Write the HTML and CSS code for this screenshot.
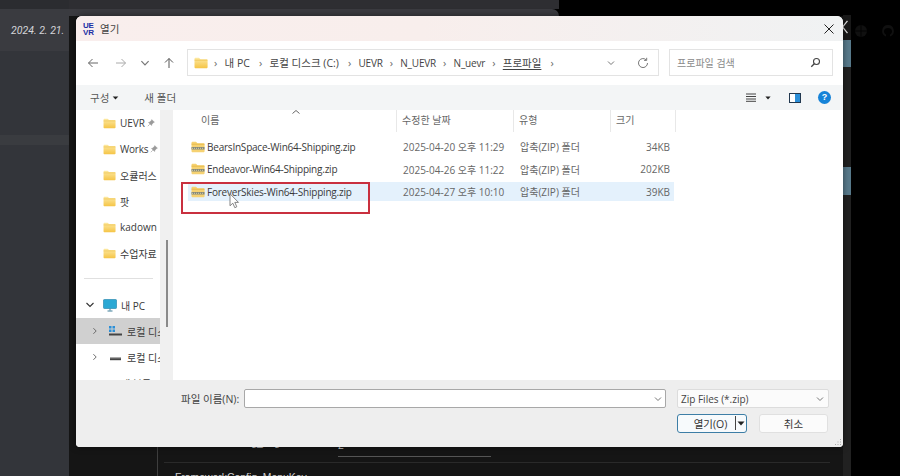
FILE: index.html
```html
<!DOCTYPE html>
<html lang="ko">
<head>
<meta charset="utf-8">
<title>열기</title>
<link rel="stylesheet" href="styles.css">
</head>
<body>
<svg class="defs" width="0" height="0">
  <defs>
    <linearGradient id="fg" x1="0" y1="0" x2="0" y2="1"><stop offset="0" stop-color="#fdeaa5"/><stop offset="1" stop-color="#f5c445"/></linearGradient>
    <symbol id="folder" viewBox="0 0 14 12"><path d="M.5 2C.5 1.200 1 .7 1.800 .7H5l1.500 1.500h5.800c.8 0 1.300.5 1.300 1.300V10c0 .8-.5 1.300-1.300 1.300H1.800C1 11.300.5 10.800.5 10z" fill="url(#fg)"/><path d="M.5 3.200h13" stroke="#e9b93c" stroke-width=".6"/></symbol>
    <symbol id="zip" viewBox="0 0 14 12"><path d="M.5 2C.5 1.200 1 .7 1.800 .7H5l1.500 1.500h5.800c.8 0 1.300.5 1.300 1.300V10c0 .8-.5 1.300-1.300 1.300H1.800C1 11.300.5 10.800.5 10z" fill="#f6d272"/><path d="M.5 3.200h13" stroke="#e3b03a" stroke-width=".7"/><path d="M.5 6h13v2.600H.5z" fill="#86897a"/><path d="M1 7.300h12" stroke="#d8d2a8" stroke-width="1" stroke-dasharray="1 1"/></symbol>
    <symbol id="pin" viewBox="0 0 10 10"><path d="M6 .8 9.200 4 7.700 4.700 6 6.800 5.700 8 2 4.300 3.200 4 5.300 2.300zM3.500 6.500 1 9" fill="#9a9a9a" stroke="#9a9a9a" stroke-width=".8"/></symbol>
    <symbol id="chev" viewBox="0 0 10 10"><path d="M2 3.500 5 6.500 8 3.500" fill="none" stroke="#777" stroke-width="1"/></symbol>
    <symbol id="chevr" viewBox="0 0 10 10"><path d="M3 1.500 6.500 5 3 8.500" fill="none" stroke="#666" stroke-width="1.200"/></symbol>
    <symbol id="drop" viewBox="0 0 8 5"><path d="M.5 .5h7L4 4.500z" fill="#222"/></symbol>
  </defs>
</svg>

<div class="desktop">
  <aside class="left">
    <div class="left-top"></div>
    <div class="date-band"><span class="date">2024. 2. 21.</span></div>
    <div class="left-gap"></div>
    <div class="left-band"></div>
  </aside>

  <main class="center">
    <div class="center-top">
      <div class="center-top-fill">
        <div class="ctf-dark"></div>
        <div class="ctf-light"></div>
      </div>
    </div>
    <div class="center-body">
      <div class="content-col">
        <div class="setting-row">
          <span class="setting-label">FrameworkConfig_LogLevel</span>
          <span class="setting-value">2</span>
        </div>
        <div class="setting-name">FrameworkConfig_MenuKey</div>
      </div>
    </div>
  </main>

  <div class="strip">
    <div class="strip-top">
      <svg class="strip-x" width="8" height="16" viewBox="0 0 8 16"><path d="M-6 1 4.500 14M4.500 1-6 14" stroke="#e8e8e8" stroke-width="1.300" fill="none"/></svg>
    </div>
    <div class="strip-blue one"></div>
    <div class="strip-dark one"></div>
    <div class="strip-blue two"></div>
    <div class="strip-dark rest"></div>
  </div>

  <div class="far-right">
    <svg width="14" height="14" viewBox="0 0 14 14"><circle cx="7" cy="7" r="6" fill="#101010"/><path d="M1 7h12M7 1v12" stroke="#000" stroke-width=".8"/></svg>
    <svg width="14" height="14" viewBox="0 0 14 14"><path d="M7 1a6 6 0 0 0-2 11.600V10.500C3.500 10 3 8.500 3 7.300 3 5 5 4 7 4s4 1 4 3.300c0 1.200-.5 2.700-2 3.200v2.100A6 6 0 0 0 7 1z" fill="#101010"/></svg>
  </div>

  <section class="dialog">
    <header class="titlebar">
      <span class="logo">UE<br>VR</span>
      <span class="title">열기</span>
      <svg class="close" width="12" height="12" viewBox="0 0 12 12"><path d="M1.500 1.500l9 9M10.500 1.500l-9 9" stroke="#222" stroke-width="1"/></svg>
    </header>

    <div class="navrow">
      <div class="navbtns">
        <svg class="nav-i" width="12" height="12" viewBox="0 0 12 12"><path d="M11 6H1.500M5.500 2 1.500 6l4 4" fill="none" stroke="#666" stroke-width="1"/></svg>
        <svg class="nav-i" width="12" height="12" viewBox="0 0 12 12"><path d="M1 6h9.500M6.500 2l4 4-4 4" fill="none" stroke="#aaa" stroke-width="1"/></svg>
        <svg class="nav-i tight" width="12" height="12" viewBox="0 0 10 10"><use href="#chev"/></svg>
        <svg class="nav-i tight" width="12" height="12" viewBox="0 0 12 12"><path d="M6 11V1.500M2 5.500l4-4 4 4" fill="none" stroke="#555" stroke-width="1"/></svg>
      </div>
      <div class="address">
        <svg class="addr-folder" width="14" height="12"><use href="#folder"/></svg>
        <span class="sep">›</span><span class="crumb ko">내 PC</span>
        <span class="sep">›</span><span class="crumb ko">로컬 디스크 (C:)</span>
        <span class="sep">›</span><span class="crumb lat">UEVR</span>
        <span class="sep">›</span><span class="crumb lat">N_UEVR</span>
        <span class="sep">›</span><span class="crumb lat">N_uevr</span>
        <span class="sep">›</span><span class="crumb ko last">프로파일</span>
        <span class="sep">›</span>
        <span class="addr-spacer"></span>
        <svg class="addr-chev" width="10" height="10"><use href="#chev"/></svg>
        <svg class="refresh" width="12" height="12" viewBox="0 0 12 12"><path d="M10.500 6A4.500 4.500 0 1 1 9 2.700" fill="none" stroke="#777" stroke-width="1"/><path d="M9.700.8v2.600H7.100" fill="none" stroke="#777" stroke-width="1"/></svg>
      </div>
      <div class="search">
        <span class="search-text">프로파일 검색</span>
        <svg width="11" height="11" viewBox="0 0 11 11"><circle cx="6.500" cy="4.500" r="3" fill="none" stroke="#444" stroke-width="1.100"/><path d="M4.300 6.700 1.300 9.700" stroke="#444" stroke-width="1.300"/></svg>
      </div>
    </div>

    <div class="toolbar">
      <span class="tool">구성 <svg width="7" height="4"><use href="#drop"/></svg></span>
      <span class="tool newf">새 폴더</span>
      <span class="tool-spacer"></span>
      <svg class="view" width="10" height="9" viewBox="0 0 10 9"><path d="M0 1h10M0 3.500h10M0 6h10M0 8.300h10" stroke="#444" stroke-width="1"/></svg>
      <svg class="view-drop" width="6" height="4"><use href="#drop"/></svg>
      <svg class="pane-i" width="12" height="10" viewBox="0 0 12 10"><rect x=".5" y=".5" width="11" height="9" fill="#fff" stroke="#22384f"/><rect x="6" y="1" width="5" height="8" fill="#2b8fd8"/></svg>
      <span class="help">?</span>
    </div>

    <div class="body">
      <nav class="sidebar">
        <div class="side-row"><svg class="s-folder" width="13" height="11"><use href="#folder"/></svg><span class="side-text">UEVR</span><svg class="pin" width="8" height="8"><use href="#pin"/></svg></div>
        <div class="side-row"><svg class="s-folder" width="13" height="11"><use href="#folder"/></svg><span class="side-text works">Works</span><svg class="pin" width="8" height="8"><use href="#pin"/></svg></div>
        <div class="side-row"><svg class="s-folder" width="13" height="11"><use href="#folder"/></svg><span class="side-text">오큘러스</span></div>
        <div class="side-row"><svg class="s-folder" width="13" height="11"><use href="#folder"/></svg><span class="side-text">팟</span></div>
        <div class="side-row"><svg class="s-folder" width="13" height="11"><use href="#folder"/></svg><span class="side-text">kadown</span></div>
        <div class="side-row"><svg class="s-folder" width="13" height="11"><use href="#folder"/></svg><span class="side-text">수업자료</span></div>
        <div class="side-divider"></div>
        <div class="side-row pc">
          <svg class="tw-open" width="10" height="10" viewBox="0 0 10 10"><path d="M1.500 3 5 6.500 8.500 3" fill="none" stroke="#333" stroke-width="1.100"/></svg>
          <svg class="s-pc" width="14" height="13" viewBox="0 0 14 13"><rect x=".5" y=".5" width="13" height="9" rx=".8" fill="#2ba8d4" stroke="#1c7fa8" stroke-width=".6"/><path d="M7 9.500v2M4.500 12h5" stroke="#3f7f9a" stroke-width="1"/></svg>
          <span class="side-text">내 PC</span>
        </div>
        <div class="side-row drive selected">
          <svg class="tw" width="8" height="8" viewBox="0 0 10 10"><use href="#chevr"/></svg>
          <svg class="s-drive" width="13" height="11" viewBox="0 0 13 11"><rect x="0" y="0" width="2.500" height="2.500" fill="#2b8fd8"/><rect x="3.500" y="0" width="2.500" height="2.500" fill="#2b8fd8"/><rect x="0" y="3.500" width="2.500" height="2.500" fill="#2b8fd8"/><rect x="3.500" y="3.500" width="2.500" height="2.500" fill="#2b8fd8"/><rect x="0" y="7.500" width="13" height="2" fill="#444"/></svg>
          <span class="side-text">로컬 디스크 (C:)</span>
        </div>
        <div class="side-row drive">
          <svg class="tw" width="8" height="8" viewBox="0 0 10 10"><use href="#chevr"/></svg>
          <svg class="s-drive" width="13" height="11" viewBox="0 0 13 11"><rect x="1" y="5" width="11" height="1.200" fill="#aaa"/><rect x="1" y="6.200" width="11" height="2" fill="#444"/></svg>
          <span class="side-text">로컬 디스크 (D:)</span>
        </div>
        <div class="side-row drive clipped"><span class="side-text">새 볼륨</span></div>
      </nav>
      <div class="side-scroll"><div class="side-thumb"></div></div>

      <div class="files">
        <div class="file-head">
          <span class="hcell first">이름<svg class="sort" width="8" height="4" viewBox="0 0 8 4"><path d="M.5 3.500 4 .5l3.500 3" fill="none" stroke="#666"/></svg></span>
          <span class="hcell">수정한 날짜</span>
          <span class="hcell">유형</span>
          <span class="hcell">크기</span>
        </div>
        <div class="file-row">
          <span class="fname"><svg width="14" height="12"><use href="#zip"/></svg>BearsInSpace-Win64-Shipping.zip</span>
          <span class="fcell">2025-04-20 오후 11:29</span>
          <span class="fcell">압축(ZIP) 폴더</span>
          <span class="fcell size">34KB</span>
        </div>
        <div class="file-row">
          <span class="fname"><svg width="14" height="12"><use href="#zip"/></svg>Endeavor-Win64-Shipping.zip</span>
          <span class="fcell">2025-04-26 오후 11:22</span>
          <span class="fcell">압축(ZIP) 폴더</span>
          <span class="fcell size">202KB</span>
        </div>
        <div class="file-row sel">
          <span class="fname"><svg width="14" height="12"><use href="#zip"/></svg>ForeverSkies-Win64-Shipping.zip</span>
          <span class="fcell">2025-04-27 오후 10:10</span>
          <span class="fcell">압축(ZIP) 폴더</span>
          <span class="fcell size">39KB</span>
        </div>
        <div class="redbox"></div>
        <svg class="cursor" width="11" height="16" viewBox="0 0 11 16"><path d="M1 .8v12l2.800-2.600 2 4.500 2-.9-2-4.400h3.700z" fill="#fff" stroke="#777" stroke-width=".9"/></svg>
      </div>
    </div>

    <footer class="footer">
      <div class="foot-line">
        <label class="fn-label">파일 이름(N):</label>
        <div class="fn-input"><svg width="10" height="10"><use href="#chev"/></svg></div>
        <div class="fn-type"><span>Zip Files (*.zip)</span><svg width="10" height="10"><use href="#chev"/></svg></div>
      </div>
      <div class="foot-btns">
        <div class="btn open"><span class="open-text">열기(O)</span><span class="open-sep"></span><svg width="8" height="5"><use href="#drop"/></svg></div>
        <div class="btn cancel">취소</div>
      </div>
      <svg class="grip" width="8" height="8" viewBox="0 0 8 8"><path d="M6 1h1v1H6zM6 3.500h1v1H6zM6 6h1v1H6zM3.500 3.500h1v1h-1zM3.500 6h1v1h-1zM1 6h1v1H1z" fill="#aaa"/></svg>
    </footer>
  </section>
</div>
</body>
</html>
```
FILE: styles.css
```css
* { box-sizing: border-box; }
html, body { margin: 0; padding: 0; background: #000; }
body { font-family: "Open Sans", "Noto Sans CJK KR", sans-serif; font-size: 10px; color: #444; }
.defs { position: absolute; }
svg { flex: none; }

.desktop { position: relative; width: 900px; height: 476px; display: flex; overflow: hidden; background: #000; }

/* backdrop */
.left { width: 69px; display: flex; flex-direction: column; background: #33353a; }
.left-top { height: 9px; background: #2b2c30; }
.date-band { height: 42px; background: #3a3b40; display: flex; align-items: center; padding: 0 0 0 11px; }
.date { font: italic 10.500px Roboto, sans-serif; color: #d4d4d8; white-space: nowrap; }
.left-gap { height: 84px; }
.left-band { height: 10px; background: #3a3c40; }

.center { width: 774px; display: flex; flex-direction: column; }
.center-top { height: 16px; }
.center-top-fill { width: 490px; height: 16px; display: flex; flex-direction: column; }
.ctf-dark { height: 9px; background: #2e2e32; }
.ctf-light { height: 7px; background: #3b3b40; border-radius: 0 10px 0 0; }
.center-body { flex: 1; background: #151515; display: flex; justify-content: flex-end; min-height: 0; overflow: hidden; }
.content-col { width: 686px; border-left: 1px solid #3e3e3e; padding: 421px 13px 0 6px; }
.setting-row { height: 26px; border-bottom: 1px solid #2a2a2a; display: flex; color: #cfcfcf; font-family: "Liberation Sans", sans-serif; font-size: 10.400px; line-height: 12px; padding-left: 11px; }
.setting-label { width: 163px; white-space: nowrap; }
.setting-value { width: 153px; height: 20px; border-bottom: 1px solid #555; padding-top: 3px; }
.setting-name { color: #d0d0d0; font-family: "Liberation Sans", sans-serif; font-size: 10.400px; line-height: 13px; padding: 8px 0 0 11px; white-space: nowrap; }

.strip { width: 8px; display: flex; flex-direction: column; background: #000; }
.strip-top { height: 40px; padding-top: 15px; overflow: hidden; }
.strip-x { display: block; background: #191919; height: 25px; padding: 5px 0; width: 8px; }
.strip-blue { background: #587a8b; }
.strip-blue.one { height: 27px; }
.strip-blue.two { height: 28px; }
.strip-dark { background: #212121; }
.strip-dark.one { height: 100px; }
.strip-dark.rest { flex: 1; }

.far-right { flex: 1; display: flex; gap: 13px; padding: 24px 0 0 3px; align-items: flex-start; }

/* dialog window */
.dialog { position: absolute; left: 76px; top: 16px; width: 767px; height: 431px; border-radius: 6px 6px 4px 4px; overflow: hidden; background: #fff; display: flex; flex-direction: column; box-shadow: 0 0 6px rgba(0,0,0,.5); }

.titlebar { height: 25px; display: flex; align-items: center; padding: 0 8px 0 7px; background: linear-gradient(90deg, #f9eeed 0%, #f8eeec 45%, #f0f2f3 100%); }
.logo { width: 11px; font: bold 8px/7px "Liberation Sans", sans-serif; color: #1c2fa5; letter-spacing: -.2px; }
.title { margin-left: 6px; font-size: 10.500px; color: #444; flex: 1; }
.close { display: block; }

.navrow { height: 44px; display: flex; align-items: flex-start; padding-top: 8px; flex: none; }
.navbtns { width: 111px; height: 27px; display: flex; align-items: center; padding-left: 11px; gap: 16px; }
.tight { margin-left: -4px; }
.address { width: 472px; height: 27px; border: 1px solid #e3e3e3; display: flex; align-items: center; padding: 0 9px 0 6px; font-size: 10px; color: #444; white-space: nowrap; letter-spacing: -.2px; }
.addr-folder { margin-right: 2px; }
.sep { color: #666; font-size: 11px; margin: 0 7.500px 0 4px; line-height: 10px; }
.crumb { margin-right: 5px; }
.crumb.lat { margin-right: 3px; }
.crumb.ko { font-size: 10.500px; letter-spacing: 0; }
.crumb.last { text-decoration: underline; text-underline-offset: 2px; }
.addr-spacer { flex: 1; }
.addr-chev { margin-right: 21px; }
.search { width: 164px; height: 27px; margin-left: 10px; border: 1px solid #e3e3e3; display: flex; align-items: center; justify-content: space-between; padding: 0 11px 0 7px; }
.search-text { color: #8a8a8a; font-size: 10px; }

.toolbar { height: 25px; flex: none; background: #f3f5f6; display: flex; align-items: center; padding-right: 12px; padding-left: 14px; }
.tool { font-size: 10.500px; color: #555; display: flex; align-items: center; gap: 3px; }
.tool svg { display: block; }
.newf { margin-left: 25px; }
.tool-spacer { flex: 1; }
.view { margin-right: 9px; }
.view-drop { margin-right: 18px; }
.pane-i { margin-right: 17px; }
.help { width: 13px; height: 13px; border-radius: 50%; background: #1683d8; color: #fff; font: bold 9px/13px "Liberation Sans", sans-serif; text-align: center; }

.body { flex: 1; min-height: 0; display: flex; background: #fff; }
.sidebar { width: 84px; overflow: hidden; flex: none; }
.side-row { height: 26px; display: flex; align-items: center; padding-left: 27px; font-size: 10px; color: #3a3a3a; white-space: nowrap; overflow: hidden; }
.s-folder { margin-right: 4px; }
.side-text { flex: none; }
.works { letter-spacing: -.2px; }
.pin { margin-left: 2px; }
.side-divider { height: 26px; position: relative; }
.side-divider::after { content: ""; position: absolute; left: 8px; right: 7px; top: 12px; border-top: 1px solid #e0e0e0; }
.pc { padding-left: 9px; }
.tw-open { margin-right: 8px; }
.s-pc { margin-right: 4px; }
.drive { padding-left: 15px; }
.drive.selected { background: #d0d0d0; }
.tw { margin-right: 10px; }
.s-drive { margin-right: 5px; }
.clipped { padding-left: 45px; }

.side-scroll { width: 13px; flex: none; background: #f0f0f0; padding: 130px 0 0 6px; }
.side-thumb { width: 2px; height: 87px; background: #8a8a8a; }

.files { flex: 1; position: relative; min-width: 0; }
.file-head { height: 22px; display: grid; grid-template-columns: 224px 117px 97px 65px; }
.hcell { border-right: 1px solid #e8e8e8; padding-left: 5px; font-size: 10px; color: #666; line-height: 20px; position: relative; }
.hcell.first { padding-left: 28px; }
.sort { position: absolute; left: 119px; top: 0; }
.file-row { height: 19px; margin: 3.500px 0 0 15px; width: 486px; display: grid; grid-template-columns: 209px 117px 97px 63px; align-items: center; font-size: 10px; }
.file-head + .file-row { margin-top: 5px; }
.file-row.sel { background: #e4f1fc; }
.fname { display: flex; align-items: center; gap: 2px; padding-left: 3px; color: #3a3a3a; white-space: nowrap; letter-spacing: -.22px; }
.fcell { color: #666; padding-left: 6px; white-space: nowrap; }
.size { text-align: right; padding: 0 4px 0 0; }
.redbox { position: absolute; left: 8px; top: 71.500px; width: 189px; height: 32px; border: 2px solid #c9303f; }
.cursor { position: absolute; left: 56px; top: 83px; }

.footer { height: 67px; flex: none; background: #eeeeee; padding: 9px 14px 0 105px; position: relative; }
.foot-line { display: flex; align-items: center; height: 19px; }
.fn-label { width: 63px; font-size: 10.500px; color: #444; white-space: nowrap; }
.fn-input { width: 422px; height: 19px; background: #fff; border: 1px solid #a8a8a8; border-radius: 2px; display: flex; align-items: center; justify-content: flex-end; padding-right: 2px; }
.fn-type { width: 152px; height: 19px; margin-left: 11px; background: #fbfbfb; border: 1px solid #dcdcdc; border-radius: 2px; display: flex; align-items: center; justify-content: space-between; padding: 0 3px; font-size: 10px; color: #444; }
.foot-btns { display: flex; justify-content: flex-end; gap: 12px; margin-top: 5.500px; padding-right: 1px; }
.btn { height: 19px; border-radius: 3px; font-size: 10.500px; color: #333; display: flex; align-items: center; justify-content: center; background: #fbfbfb; }
.open { width: 70px; border: 1px solid #3d7ea6; background: #f7fafc; padding: 0 1px 0 0; }
.open-text { flex: 1; text-align: center; padding-left: 8px; }
.open-sep { width: 1px; height: 14px; background: #444; margin-right: 1px; }
.cancel { width: 69px; border: 1px solid #e0e0e0; }
.grip { position: absolute; right: 1px; bottom: 1px; }
```
